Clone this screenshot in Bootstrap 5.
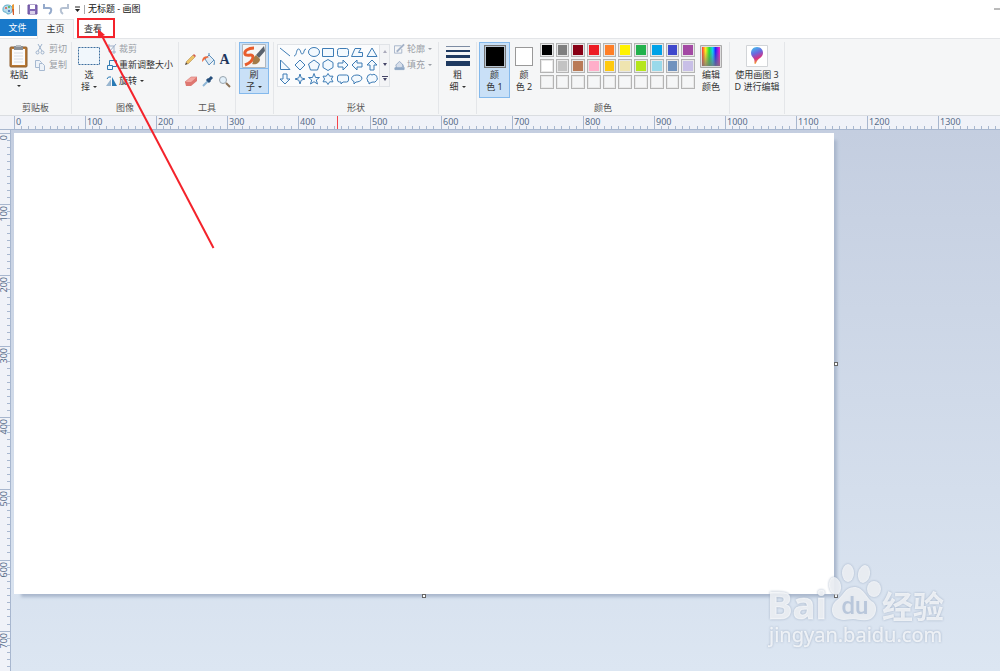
<!DOCTYPE html>
<html lang="zh-CN">
<head>
<meta charset="utf-8">
<meta name="viewport" content="width=device-width, initial-scale=1">
<title>无标题 - 画图</title>
<link href="https://cdn.jsdelivr.net/npm/bootstrap@5.3.0/dist/css/bootstrap.min.css" rel="stylesheet">
<script src="https://cdn.jsdelivr.net/npm/bootstrap@5.3.0/dist/js/bootstrap.bundle.min.js"></script>
<style>
  body { font: 9px/12px "Noto Sans", "Noto Sans CJK SC", sans-serif; color: #333; background: #fff; }
  button { border: 0; background: none; padding: 0; color: inherit; font: inherit; white-space: nowrap; }
  button:disabled { color: #9a9ea6; }
  svg { display: block; flex: none; }
  .titlebar { height: 18px; color: #111; }
  .titlebar .rule { width: 1px; height: 9px; background: #aaa; margin: 0 3px; }
  .tabs { height: 21px; border-bottom: 1px solid #e3e5e8; padding-top: 1px; }
  .tabs a { line-height: 18px; text-align: center; text-decoration: none; color: #333; }
  .tabs .tab-file { width: 37px; height: 17px; background: #1979ca; color: #fff; padding-right: 2px; }
  .tabs .tab-home { width: 37px; height: 20px; background: #f5f6f7; border: 1px solid #e3e5e8; border-bottom: 0; }
  .tabs .tab-view { width: 38px; border: 2px solid #f4232b; line-height: 17px; margin: -1px 0 0 3px; height: 20px; padding-right: 6px; }
  .ribbon { height: 76px; background: #f5f6f7; padding: 3px 0; }
  .grp { border-right: 1px solid #e4e6e9; height: 72px; display: flex; flex-direction: column; justify-content: space-between; flex: none; }
  .grp-name { text-align: center; color: #555; height: 12px; }
  .w-clip { width: 72px; } .w-img { width: 107px; } .w-tool { width: 57px; } .w-narrow { width: 38px; }
  .w-shape { width: 165px; } .w-color { width: 253px; } .w-three { width: 55px; }
  .big { display: flex; flex-direction: column; align-items: center; height: 56px; border: 1px solid transparent; }
  .big .pic { height: 26px; display: flex; align-items: center; justify-content: center; }
  .caret { display: inline-block; border: 2px solid transparent; border-top-color: currentColor; border-bottom: 0; vertical-align: 2px; margin-left: 3px; }
  .lines { display: flex; flex-direction: column; gap: 4px; padding-top: 1px; }
  .lines button { display: flex; align-items: center; gap: 2px; height: 12px; }
  .clip-lines { margin-left: 7px; }
  .clip-lines button { gap: 3px; }
  .tools { display: grid; grid-template-columns: repeat(3, 17px); grid-auto-rows: 22px; place-items: center; padding: 6px 0 0 3px; }
  .brush { width: 30px; height: 52px; background: #c9e0f7; border-color: #84b9ec; margin-left: 3px; }
  .brush .pic { border-bottom: 1px solid #84b9ec; width: 28px; height: 26px; }
  .shapes { width: 113px; height: 43px; border: 1px solid #e0e3e7; background: #fbfcfd; margin: 2px 0 0 3px; }
  .shapes .cells { display: grid; grid-template-columns: repeat(7, 1fr); width: 101px; place-items: center; }
  .shapes .cells svg { width: 12px; height: 12px; fill: #f3f9fe; stroke: #3e7cb5; stroke-width: 1; }
  .shapes .scroller { width: 10px; background: #f3f4f6; border-left: 1px solid #e0e3e7; }
  .color-on { width: 31px; background: #c9e0f7; border-color: #84b9ec; margin: 0 4px 0 2px; }
  .color-a { width: 22px; height: 23px; background: #000; border: 1px solid #777; outline: 1px solid #b8c4d0; outline-offset: -2px; }
  .color-b { width: 18px; height: 19px; background: #fff; border: 1px solid #999; }
  .palette { display: grid; grid-template-columns: repeat(10, 1fr); gap: 2px; width: 155px; margin: 1px 0 0 6px; }
  .palette button { height: 14px; border: 1px solid #b4b4b4; box-shadow: inset 0 0 0 1px #e8e8e8; }
  .ruler-h { height: 15px; background: #f0f2f8; border-top: 1px solid #dadde1; border-bottom: 1px solid #a8b7cf; overflow: hidden; }
  .ruler-v { width: 11px; background: #f0f2f8; border-right: 1px solid #a8b7cf; overflow: hidden; position: relative; flex: none; }
  .ruler-v svg { position: absolute; inset: 0; }
  .ruler-h text, .ruler-v text { fill: #586d8a; font-size: 9px; }
  .ruler-h line, .ruler-v line { stroke: #a8b7cf; stroke-width: 1; shape-rendering: crispEdges; }
  .ruler-h .cursor-mark { stroke: #f4444b; }
  .workspace { background: linear-gradient(#c4cee0, #dce6f2); padding: 3px 166px 77px 3px; }
  .sheet { background: #fff; box-shadow: 5px 5px 3px -2px #a9b7cc; }
  .grip { position: absolute; width: 4px; height: 4px; background: #fff; border: 1px solid #666; }
  .grip-e { left: 100%; top: 50%; margin-top: -2px; } .grip-s { left: 50%; top: 100%; margin-left: -2px; } .grip-se { left: 100%; top: 100%; }
  .pointer { position: absolute; left: 0; top: 0; pointer-events: none; }
  .watermark { position: absolute; right: 48px; bottom: 12px; pointer-events: none; filter: drop-shadow(0 0 1px #8fa0b8); }
</style>
</head>
<body class="vh-100 d-flex flex-column overflow-hidden position-relative">

<header class="titlebar d-flex align-items-center">
  <svg width="16" height="14" viewBox="0 0 16 14"><path d="M3 7C3 3 8 2 11 4c3 3 1 8-3 8-2 0-1-2-3-2S3 9 3 7z" fill="#b5dcec" stroke="#5eabc9"/><circle cx="6" cy="6" r="1" fill="#db5d45"/><circle cx="9" cy="5" r="1" fill="#4aad52"/><circle cx="9" cy="9" r="1" fill="#3c66b6"/><path d="M12 3l2-1v5h-2z" fill="#e89635"/><path d="M12 7h2v6h-1z" fill="#d35d2b"/></svg>
  <span class="rule"></span>
  <button class="ms-1" aria-label="保存"><svg width="11" height="11" viewBox="0 0 11 11"><path d="M1 1h9v9H1z" fill="#8168b4" stroke="#6c539e"/><path d="M3 1h5v4H3z" fill="#fff"/><path d="M3 7h5v3H3z" fill="#d9d0ea"/></svg></button>
  <button class="ms-1" aria-label="撤消"><svg width="12" height="11" viewBox="0 0 12 11" fill="none" stroke="#95aacb" stroke-width="2"><path d="M2 4h5c3 0 3 4 0 6"/><path d="M2 0v4h4"/></svg></button>
  <button class="ms-1" aria-label="重做"><svg width="12" height="11" viewBox="0 0 12 11" fill="none" stroke="#b5c1d2" stroke-width="2"><path d="M10 4H5C2 4 2 8 5 10"/><path d="M10 0v4H6"/></svg></button>
  <button class="ms-1" aria-label="自定义"><svg width="7" height="7" viewBox="0 0 7 7"><path d="M1 1h5" stroke="#222"/><path d="M1 3h5L3.500 6z" fill="#222"/></svg></button>
  <span class="rule"></span>
  <span>无标题 - 画图</span>
  <button class="ms-auto" aria-label="最小化"><svg width="6" height="2"><path d="M0 1h6" stroke="#777"/></svg></button>
</header>

<nav class="tabs d-flex align-items-start">
  <a class="tab-file" href="#file">文件</a>
  <a class="tab-home" href="#home">主页</a>
  <a class="tab-view" href="#view">查看</a>
</nav>

<section class="ribbon d-flex">
  <div class="grp w-clip">
    <div class="d-flex">
      <button class="big ms-1"><span class="pic ps-1"><svg width="20" height="24" viewBox="0 0 20 24"><rect x="1" y="3" width="17" height="20" rx="1" fill="#b87935" stroke="#8e5e2d"/><path d="M3 5h13v16H3z" fill="#fbfbfb"/><path d="M5 2h9v4H5z" fill="#8b9197"/><path d="M7 1h5v2H7z" fill="#b3b8bc"/><path d="M5 9h9M5 12h9M5 15h9M5 18h9" stroke="#d7dce2"/></svg></span><span class="ps-1">粘贴</span><i class="caret mt-1 ms-1"></i></button>
      <div class="lines clip-lines ms-1">
        <button disabled><svg width="12" height="12" viewBox="0 0 12 12" fill="none" stroke="#9eb3cc" stroke-width="1"><path d="M4 1l4 7M8 1L4 8"/><circle cx="3.500" cy="9.500" r="1.500"/><circle cx="8.500" cy="9.500" r="1.500"/></svg>剪切</button>
        <button disabled><svg width="12" height="12" viewBox="0 0 12 12" fill="#edf2f8" stroke="#a6b9d1"><path d="M1.500 1.500h4l2 2v5h-6z"/><path d="M5.500 4.500h3l2 2v5h-5z"/></svg>复制</button>
      </div>
    </div>
    <div class="grp-name">剪贴板</div>
  </div>

  <div class="grp w-img">
    <div class="d-flex">
      <button class="big ms-1"><span class="pic"><svg width="24" height="20"><rect x="1.500" y="1.500" width="21" height="17" fill="#f1f7fc" stroke="#3e6f9f" stroke-dasharray="2 1"/></svg></span><span>选</span><span>择<i class="caret"></i></span></button>
      <div class="lines ms-1">
        <button disabled><svg width="11" height="12" viewBox="0 0 11 12" fill="none" stroke="#9fb1ca"><path d="M3 1v8h7M1 3h7v8M3 9l7-8"/></svg>裁剪</button>
        <button><svg width="11" height="12" viewBox="0 0 11 12" fill="#eef7fd" stroke="#337ab0"><path d="M3.500 1.500h7v6h-7z"/><path d="M1.500 6.500h5v4h-5z"/></svg><span>重新调整大小</span></button>
        <button><svg width="11" height="12" viewBox="0 0 11 12"><path d="M5 4v7H0z" fill="#99b6d0"/><path d="M6 2l5 9H6z" fill="#2879b4"/><path d="M1 4q1-3 4-2" fill="none" stroke="#2879b4"/></svg><span>旋转<i class="caret"></i></span></button>
      </div>
    </div>
    <div class="grp-name">图像</div>
  </div>

  <div class="grp w-tool">
    <div class="tools">
      <button aria-label="铅笔"><svg width="13" height="13" viewBox="0 0 13 13"><path d="M1 12l1-3 2 2z" fill="#54473c"/><path d="M2 9l7-7 2 2-7 7z" fill="#edc365" stroke="#a98043" stroke-width=".5"/><path d="M9 2l1-1 2 2-1 1z" fill="#d4574d"/></svg></button>
      <button aria-label="填充"><svg width="14" height="13" viewBox="0 0 14 13"><path d="M4 6l4-4 5 5-5 5z" fill="#dfebf5" stroke="#5d8fbb"/><path d="M8 2V0M13 7c1 2 0 4 0 5" stroke="#4a86b8" fill="none"/><path d="M8 4C4 2 1 4 1 9l3-3z" fill="#ef6b3c"/></svg></button>
      <button aria-label="文本"><svg width="13" height="13" viewBox="0 0 13 13"><text x="6.500" y="11" text-anchor="middle" font-family="Liberation Serif, serif" font-weight="700" font-size="14" fill="#1d355c">A</text></svg></button>
      <button aria-label="橡皮擦"><svg width="14" height="12" viewBox="0 0 14 12"><path d="M1 7l6-5h6l-6 6z" fill="#f3a6a0" stroke="#d97f79" stroke-width=".7"/><path d="M1 7h6v4H2zM7 7l6-5v4l-6 5z" fill="#de7771"/></svg></button>
      <button aria-label="取色器"><svg width="13" height="13" viewBox="0 0 13 13"><path d="M2 11l6-6" stroke="#8eb6d6" stroke-width="2"/><path d="M6 4l3 3M8 5l3-3" stroke="#264f7c" stroke-width="3"/></svg></button>
      <button aria-label="放大镜"><svg width="13" height="13" viewBox="0 0 13 13"><circle cx="5" cy="5" r="3.500" fill="#e2f0fa" stroke="#98a4ae"/><path d="M8 8l4 4" stroke="#8b7257" stroke-width="2"/></svg></button>
    </div>
    <div class="grp-name">工具</div>
  </div>

  <div class="grp w-narrow">
    <button class="big brush"><span class="pic"><svg width="24" height="24" viewBox="0 0 24 24"><path d="M.5.500h23v23H.5z" fill="#f5f5f5" stroke="#b1b7bd"/><path d="M12 4C6 4 2 7 3 10s8-1 8 3-3 6-8 8" fill="none" stroke="#e85c2b" stroke-width="3"/><path d="M22 2l-8 9 3 3 6-7z" fill="#59626d"/><path d="M14 11l4 4c0 4-4 6-8 5 2-2 0-6 4-9z" fill="#a37b48"/></svg></span><span>刷</span><span>子<i class="caret"></i></span></button>
  </div>

  <div class="grp w-shape">
    <div class="d-flex">
      <div class="shapes d-flex">
        <div class="cells">
          <svg viewBox="0 0 12 12"><path d="M1 2l10 8"/></svg>
          <svg viewBox="0 0 12 12"><path d="M0 10C3 10 2 3 4.500 3s2 6 4 5 1-5 3.500-5" fill="none"/></svg>
          <svg viewBox="0 0 12 12"><ellipse cx="6" cy="6" rx="5.500" ry="4.500"/></svg>
          <svg viewBox="0 0 12 12"><path d="M.5 2.500h11v8H.5z"/></svg>
          <svg viewBox="0 0 12 12"><rect x=".5" y="2.500" width="11" height="8" rx="2"/></svg>
          <svg viewBox="0 0 12 12"><path d="M.5 10.500L4 2.500h6L7.500 6.500h4v4z"/></svg>
          <svg viewBox="0 0 12 12"><path d="M6 2l5 8.500H1z"/></svg>
          <svg viewBox="0 0 12 12"><path d="M1.500 1v9.500H11z"/></svg>
          <svg viewBox="0 0 12 12"><path d="M6 1l5 5-5 5-5-5z"/></svg>
          <svg viewBox="0 0 12 12"><path d="M6 1l5.500 4-2 6h-7l-2-6z"/></svg>
          <svg viewBox="0 0 12 12"><path d="M6 .5l5 3v5l-5 3-5-3v-5z"/></svg>
          <svg viewBox="0 0 12 12"><path d="M1 4h5V1l5 5-5 5V8H1z"/></svg>
          <svg viewBox="0 0 12 12"><path d="M11 4H6V1L1 6l5 5V8h5z"/></svg>
          <svg viewBox="0 0 12 12"><path d="M4 11V6H1l5-5 5 5H8v5z"/></svg>
          <svg viewBox="0 0 12 12"><path d="M4 1v5H1l5 5 5-5H8V1z"/></svg>
          <svg viewBox="0 0 12 12"><path d="M6 1l1.200 3.800L11 6 7.200 7.200 6 11 4.800 7.200 1 6l3.800-1.200z"/></svg>
          <svg viewBox="0 0 12 12"><path d="M6 .5l1.500 4h4l-3.200 2.500 1.200 4L6 8.700 2.500 11l1.200-4L.5 4.500h4z"/></svg>
          <svg viewBox="0 0 12 12"><path d="M6 .5l1.700 2.700H11L9.400 6 11 8.800H7.700L6 11.500 4.300 8.800H1L2.600 6 1 3.200h3.300z"/></svg>
          <svg viewBox="0 0 12 12"><path d="M2.500 2h7q2 0 2 2v3q0 2-2 2H6l-2 2V9H2.500q-2 0-2-2V4q0-2 2-2z"/></svg>
          <svg viewBox="0 0 12 12"><path d="M3 11V8.500C-1 7 0 2 6 2s7 6 0 7H5z"/></svg>
          <svg viewBox="0 0 12 12"><path d="M3 2q1.500-1.500 3 0 2-1.500 3.500 0Q11 3 11 4.500q1 1.500-.5 3Q9 10 7 9l-2 .5L3 11V9Q1 9 1.500 7q-1.500-2 0-3Q1.500 2 3 2z"/></svg>
        </div>
        <div class="scroller d-flex flex-column justify-content-around align-items-center">
          <svg width="4" height="3"><path d="M0 3l2-3 2 3z" fill="#aab"/></svg>
          <svg width="4" height="3"><path d="M0 0h4L2 3z" fill="#446"/></svg>
          <svg width="6" height="5"><path d="M0 .5h6" stroke="#446"/><path d="M1 2h4L3 5z" fill="#446"/></svg>
        </div>
      </div>
      <div class="lines ms-1">
        <button disabled><svg width="11" height="12" viewBox="0 0 12 12" fill="none" stroke="#a4b2c8"><path d="M8 2.500H.5v8h8V6"/><path d="M3 9l8-8" stroke-width="2"/></svg><span>轮廓<i class="caret"></i></span></button>
        <button disabled><svg width="11" height="12" viewBox="0 0 12 12"><path d="M2 6l4-4 4 4-2 4H3z" fill="#d6deea" stroke="#98abc6"/><path d="M1 9h10v2H1zM9 5l2 4" fill="#8fa8c6" stroke="#8fa8c6"/></svg><span>填充<i class="caret"></i></span></button>
      </div>
    </div>
    <div class="grp-name">形状</div>
  </div>

  <div class="grp w-narrow">
    <button class="big"><span class="pic"><svg width="24" height="22" viewBox="0 0 24 22"><path d="M0 1h24v1H0z" fill="#7d8ca3"/><path d="M0 5h24v2H0zM0 10h24v3H0zM0 16h24v5H0z" fill="#1f3a61"/></svg></span><span>粗</span><span>细<i class="caret"></i></span></button>
  </div>

  <div class="grp w-color">
    <div class="d-flex">
      <button class="big color-on"><span class="pic"><span class="color-a"></span></span><span>颜</span><span>色 1</span></button>
      <button class="big"><span class="pic"><span class="color-b"></span></span><span>颜</span><span>色 2</span></button>
      <div><div class="palette" id="palette"></div></div>
      <button class="big ms-1"><span class="pic"><svg width="22" height="23"><defs><linearGradient id="hue"><stop offset="0" stop-color="#f33"/><stop offset=".2" stop-color="#fe2"/><stop offset=".4" stop-color="#2d3"/><stop offset=".6" stop-color="#1cf"/><stop offset=".75" stop-color="#22f"/><stop offset="1" stop-color="#f2b"/></linearGradient><linearGradient id="fade" x2="0" y2="1"><stop offset=".2" stop-color="#777" stop-opacity="0"/><stop offset="1" stop-color="#777" stop-opacity=".8"/></linearGradient></defs><path d="M.5.500h21v22H.5z" fill="#ddd" stroke="#aaa"/><path d="M2 2h18v19H2z" fill="url(#hue)"/><path d="M2 2h18v19H2z" fill="url(#fade)"/></svg></span><span>编辑</span><span>颜色</span></button>
    </div>
    <div class="grp-name">颜色</div>
  </div>

  <div class="grp w-three">
    <button class="big"><span class="pic"><svg width="22" height="22" viewBox="0 0 22 22"><defs><linearGradient id="pin" x2=".3" y2="1"><stop offset="0" stop-color="#3ecbf2"/><stop offset=".45" stop-color="#6c67dd"/><stop offset=".75" stop-color="#d53386"/><stop offset="1" stop-color="#f6a12c"/></linearGradient></defs><path d="M.5.500h21v21H.5z" fill="#fff" stroke="#d2d5d8"/><path d="M11 2c4 0 6 3 6 6 0 4-4 5-6 8-1 2-1 3-2 3s0-3-1-5-3-3-3-6 2-6 6-6z" fill="url(#pin)"/></svg></span><span>使用画图 3</span><span>D 进行编辑</span></button>
  </div>
</section>

<div class="ruler-h"><svg id="rulerH" width="100%" height="13"></svg></div>
<main class="d-flex flex-fill">
  <div class="ruler-v"><svg id="rulerV" width="10" height="100%"></svg></div>
  <div class="workspace flex-fill d-flex">
    <div class="sheet flex-fill position-relative">
      <span class="grip grip-e"></span><span class="grip grip-s"></span><span class="grip grip-se"></span>
    </div>
  </div>
</main>

<svg class="pointer" width="230" height="260"><path d="M213.500 248L101 34" stroke="#f4232b" stroke-width="2" fill="none"/><path d="M98 29l0 9 7-3z" fill="#f4232b"/></svg>

<svg class="watermark" width="184" height="98" viewBox="0 0 184 98" fill="#fff" fill-opacity=".75">
  <text x="-1" y="58" font-family="Open Sans, sans-serif" font-weight="700" font-size="38" stroke="#fff" stroke-opacity=".5">Bai</text>
  <ellipse cx="67" cy="25" rx="6" ry="9" transform="rotate(-12 67 25)"/><ellipse cx="80" cy="12" rx="6" ry="9"/><ellipse cx="96" cy="13" rx="6" ry="9" transform="rotate(12 96 13)"/><ellipse cx="106" cy="28" rx="7" ry="8"/>
  <path d="M86 26c10 0 12 11 19 15 6 5 3 17-6 18-7 1-10-1-14-1s-9 2-14 0c-9-2-9-14-2-19 6-4 8-13 17-13z"/>
  <text x="87" y="53" text-anchor="middle" font-family="Roboto, sans-serif" font-weight="500" font-size="24" fill="#b9c7db" fill-opacity="1">du</text>
  <text x="114" y="57" font-family="Noto Sans CJK SC, sans-serif" font-weight="700" font-size="31">经验</text>
  <text x="1" y="81" font-family="Noto Sans, sans-serif" font-size="20" stroke="#fff" stroke-opacity=".4" stroke-width=".5">jingyan.baidu.com</text>
</svg>

<script>
  const colors = ['#000000','#7f7f7f','#880015','#ed1c24','#ff7f27','#fff200','#22b14c','#00a2e8','#3f48cc','#a349a4',
                  '#ffffff','#c3c3c3','#b97a57','#ffaec9','#ffc90e','#efe4b0','#b5e61d','#99d9ea','#7092be','#c8bfe7'];
  const palette = document.getElementById('palette');
  for (let i = 0; i < 30; i++) {
    const b = document.createElement('button');
    b.setAttribute('aria-label', '颜色 ' + (i + 1));
    b.style.backgroundColor = colors[i] || '#f5f6f7';
    palette.append(b);
  }
  // One ruler tick stands for ten picture pixels, every tenth one is labelled.
  const unit = 0.711;
  const rulerH = document.getElementById('rulerH'), rulerV = document.getElementById('rulerV');
  function drawRulers() {
    const width = rulerH.parentNode.clientWidth, height = rulerV.parentNode.clientHeight;
    let h = '', v = '';
    for (let n = 0; 15 + n * unit < width; n += 10) {
      const major = n % 100 === 0, x = Math.round(14 + n * unit);
      h += `<line x1="${x + .5}" x2="${x + .5}" y1="${major ? 0 : 10}" y2="13"/>`;
      if (major) h += `<text x="${x + 2}" y="9">${n}</text>`;
    }
    for (let n = 0; 3 + n * unit < height; n += 10) {
      const major = n % 100 === 0, y = Math.round(3 + n * unit);
      v += `<line y1="${y + .5}" y2="${y + .5}" x1="${major ? 0 : 7}" x2="10"/>`;
      if (major) v += `<text transform="translate(7 ${y + 2}) rotate(-90)" text-anchor="end">${n}</text>`;
    }
    h += '<line class="cursor-mark" x1="337.5" x2="337.5" y1="0" y2="13"/>';
    rulerH.innerHTML = h;
    rulerV.innerHTML = v;
  }
  drawRulers();
  addEventListener('resize', drawRulers);
</script>
</body>
</html>
